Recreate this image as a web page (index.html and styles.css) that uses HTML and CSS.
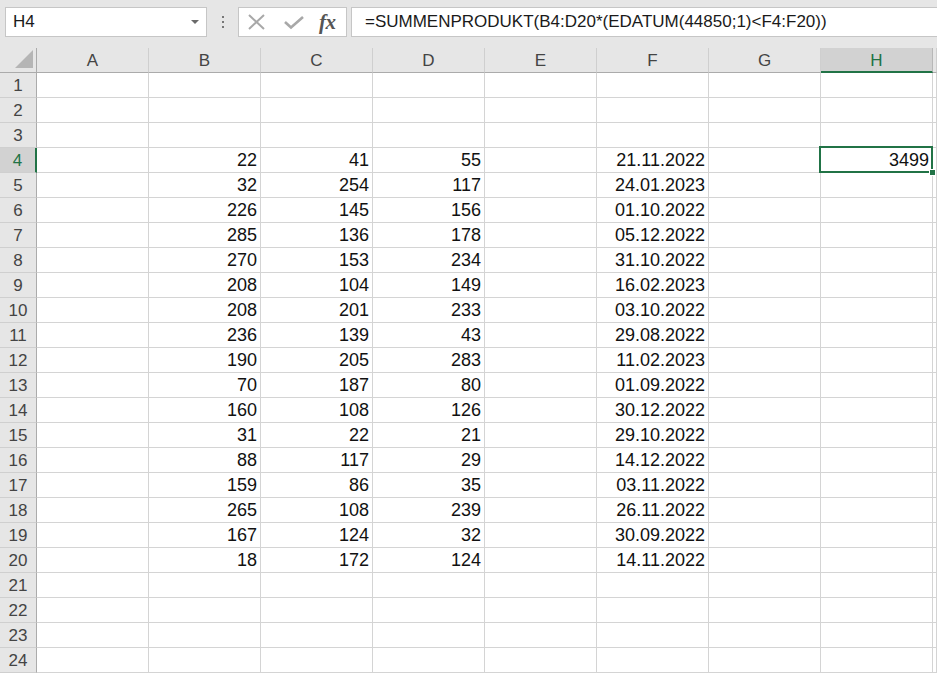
FILE: index.html
```html
<!DOCTYPE html>
<html>
<head>
<meta charset="utf-8">
<link rel="stylesheet" href="styles.css">
</head>
<body>
<div class="toolbar">
  <div class="namebox"><span class="nb-text">H4</span><span class="nb-arrow"></span></div>
  <div class="dots"><span></span><span></span><span></span></div>
  <div class="btnbox">
    <svg class="ico" width="24" height="24" viewBox="0 0 24 24"><path d="M4 5 L19 19 M19 5 L4 19" stroke="#a8a8a8" stroke-width="2" fill="none"/></svg>
    <svg class="ico" width="24" height="24" viewBox="0 0 24 24"><path d="M3 12 L9 17.5 L21 7" stroke="#a8a8a8" stroke-width="2.6" fill="none"/></svg>
    <span class="fx">fx</span>
  </div>
  <div class="formula">=SUMMENPRODUKT(B4:D20*(EDATUM(44850;1)&lt;F4:F20))</div>
</div>
<div class="sheet">
  <div class="corner"><svg width="36" height="24" viewBox="0 0 36 24"><polygon points="33,2 33,20 15,20" fill="#b5b5b5"/></svg></div>
  <div class="ch">A</div><div class="ch">B</div><div class="ch">C</div><div class="ch">D</div><div class="ch">E</div><div class="ch">F</div><div class="ch">G</div><div class="ch sel">H</div><div class="ch"></div>

  <div class="rh">1</div><div class="c"></div><div class="c"></div><div class="c"></div><div class="c"></div><div class="c"></div><div class="c"></div><div class="c"></div><div class="c"></div><div class="c"></div>
  <div class="rh">2</div><div class="c"></div><div class="c"></div><div class="c"></div><div class="c"></div><div class="c"></div><div class="c"></div><div class="c"></div><div class="c"></div><div class="c"></div>
  <div class="rh">3</div><div class="c"></div><div class="c"></div><div class="c"></div><div class="c"></div><div class="c"></div><div class="c"></div><div class="c"></div><div class="c"></div><div class="c"></div>
  <div class="rh sel">4</div><div class="c"></div><div class="c">22</div><div class="c">41</div><div class="c">55</div><div class="c"></div><div class="c">21.11.2022</div><div class="c"></div><div class="c active">3499<span class="selbox"><span class="handle"></span></span></div><div class="c"></div>
  <div class="rh">5</div><div class="c"></div><div class="c">32</div><div class="c">254</div><div class="c">117</div><div class="c"></div><div class="c">24.01.2023</div><div class="c"></div><div class="c"></div><div class="c"></div>
  <div class="rh">6</div><div class="c"></div><div class="c">226</div><div class="c">145</div><div class="c">156</div><div class="c"></div><div class="c">01.10.2022</div><div class="c"></div><div class="c"></div><div class="c"></div>
  <div class="rh">7</div><div class="c"></div><div class="c">285</div><div class="c">136</div><div class="c">178</div><div class="c"></div><div class="c">05.12.2022</div><div class="c"></div><div class="c"></div><div class="c"></div>
  <div class="rh">8</div><div class="c"></div><div class="c">270</div><div class="c">153</div><div class="c">234</div><div class="c"></div><div class="c">31.10.2022</div><div class="c"></div><div class="c"></div><div class="c"></div>
  <div class="rh">9</div><div class="c"></div><div class="c">208</div><div class="c">104</div><div class="c">149</div><div class="c"></div><div class="c">16.02.2023</div><div class="c"></div><div class="c"></div><div class="c"></div>
  <div class="rh">10</div><div class="c"></div><div class="c">208</div><div class="c">201</div><div class="c">233</div><div class="c"></div><div class="c">03.10.2022</div><div class="c"></div><div class="c"></div><div class="c"></div>
  <div class="rh">11</div><div class="c"></div><div class="c">236</div><div class="c">139</div><div class="c">43</div><div class="c"></div><div class="c">29.08.2022</div><div class="c"></div><div class="c"></div><div class="c"></div>
  <div class="rh">12</div><div class="c"></div><div class="c">190</div><div class="c">205</div><div class="c">283</div><div class="c"></div><div class="c">11.02.2023</div><div class="c"></div><div class="c"></div><div class="c"></div>
  <div class="rh">13</div><div class="c"></div><div class="c">70</div><div class="c">187</div><div class="c">80</div><div class="c"></div><div class="c">01.09.2022</div><div class="c"></div><div class="c"></div><div class="c"></div>
  <div class="rh">14</div><div class="c"></div><div class="c">160</div><div class="c">108</div><div class="c">126</div><div class="c"></div><div class="c">30.12.2022</div><div class="c"></div><div class="c"></div><div class="c"></div>
  <div class="rh">15</div><div class="c"></div><div class="c">31</div><div class="c">22</div><div class="c">21</div><div class="c"></div><div class="c">29.10.2022</div><div class="c"></div><div class="c"></div><div class="c"></div>
  <div class="rh">16</div><div class="c"></div><div class="c">88</div><div class="c">117</div><div class="c">29</div><div class="c"></div><div class="c">14.12.2022</div><div class="c"></div><div class="c"></div><div class="c"></div>
  <div class="rh">17</div><div class="c"></div><div class="c">159</div><div class="c">86</div><div class="c">35</div><div class="c"></div><div class="c">03.11.2022</div><div class="c"></div><div class="c"></div><div class="c"></div>
  <div class="rh">18</div><div class="c"></div><div class="c">265</div><div class="c">108</div><div class="c">239</div><div class="c"></div><div class="c">26.11.2022</div><div class="c"></div><div class="c"></div><div class="c"></div>
  <div class="rh">19</div><div class="c"></div><div class="c">167</div><div class="c">124</div><div class="c">32</div><div class="c"></div><div class="c">30.09.2022</div><div class="c"></div><div class="c"></div><div class="c"></div>
  <div class="rh">20</div><div class="c"></div><div class="c">18</div><div class="c">172</div><div class="c">124</div><div class="c"></div><div class="c">14.11.2022</div><div class="c"></div><div class="c"></div><div class="c"></div>
  <div class="rh">21</div><div class="c"></div><div class="c"></div><div class="c"></div><div class="c"></div><div class="c"></div><div class="c"></div><div class="c"></div><div class="c"></div><div class="c"></div>
  <div class="rh">22</div><div class="c"></div><div class="c"></div><div class="c"></div><div class="c"></div><div class="c"></div><div class="c"></div><div class="c"></div><div class="c"></div><div class="c"></div>
  <div class="rh">23</div><div class="c"></div><div class="c"></div><div class="c"></div><div class="c"></div><div class="c"></div><div class="c"></div><div class="c"></div><div class="c"></div><div class="c"></div>
  <div class="rh">24</div><div class="c"></div><div class="c"></div><div class="c"></div><div class="c"></div><div class="c"></div><div class="c"></div><div class="c"></div><div class="c"></div><div class="c"></div>
</div>
</body>
</html>
```
FILE: styles.css
```css
html, body {
  margin: 0;
  padding: 0;
  overflow: hidden;
  background: #ffffff;
  font-family: "Liberation Sans", Arial, sans-serif;
}
.toolbar {
  height: 48px;
  box-sizing: border-box;
  background: #e6e6e6;
  display: flex;
  align-items: flex-start;
  padding: 7px 0 0 5px;
}
.namebox {
  width: 202px;
  height: 30px;
  box-sizing: border-box;
  background: #fff;
  border: 1px solid #c6c6c6;
  display: flex;
  align-items: center;
  justify-content: space-between;
  padding: 0 7px 0 7px;
}
.nb-text {
  font-size: 17px;
  color: #1a1a1a;
}
.nb-arrow {
  width: 0;
  height: 0;
  border-left: 4px solid transparent;
  border-right: 4px solid transparent;
  border-top: 4px solid #6a6a6a;
}
.dots {
  width: 31px;
  height: 30px;
  display: flex;
  flex-direction: column;
  align-items: center;
  justify-content: center;
  gap: 3px;
}
.dots span {
  width: 2px;
  height: 2px;
  background: #777;
}
.btnbox {
  width: 109px;
  height: 30px;
  box-sizing: border-box;
  background: #fff;
  border: 1px solid #c6c6c6;
  display: flex;
  align-items: center;
  padding-left: 6px;
  gap: 13px;
}
.ico {
  display: block;
}
.fx {
  font-family: "Liberation Serif", "Times New Roman", serif;
  font-style: italic;
  font-weight: bold;
  font-size: 21px;
  color: #555;
  margin-left: 0px;
  letter-spacing: -0.5px;
}
.formula {
  flex: 1;
  height: 30px;
  box-sizing: border-box;
  background: #fff;
  border: 1px solid #c6c6c6;
  border-right: none;
  margin-left: 4px;
  padding-left: 13px;
  font-size: 17px;
  line-height: 28px;
  color: #1a1a1a;
  white-space: nowrap;
  overflow: hidden;
}
.sheet {
  display: grid;
  grid-template-columns: 37px repeat(8, 112px) 1fr;
  grid-auto-rows: 25px;
}
.corner {
  background: #e6e6e6;
  border-right: 1px solid #ababab;
  border-bottom: 1px solid #ababab;
  box-sizing: border-box;
}
.corner svg { display: block; }
.ch {
  background: #e6e6e6;
  border-right: 1px solid #cfcfcf;
  border-bottom: 1px solid #ababab;
  box-sizing: border-box;
  text-align: center;
  font-size: 17px;
  line-height: 25px;
  color: #444;
}
.ch.sel {
  background: #d2d2d2;
  color: #217346;
  border-bottom: 2px solid #217346;
  border-right-color: #b8b8b8;
}
.rh {
  background: #e6e6e6;
  border-right: 1px solid #ababab;
  border-bottom: 1px solid #cfcfcf;
  box-sizing: border-box;
  text-align: center;
  font-size: 17px;
  line-height: 25px;
  color: #444;
}
.rh.sel {
  background: #d2d2d2;
  color: #217346;
  border-right: 2px solid #217346;
}
.c {
  border-right: 1px solid #d4d4d4;
  border-bottom: 1px solid #d4d4d4;
  box-sizing: border-box;
  text-align: right;
  padding-right: 3px;
  font-size: 18px;
  line-height: 25px;
  color: #111;
  white-space: nowrap;
}
.active {
  position: relative;
}
.selbox {
  position: absolute;
  left: -2px;
  top: -2px;
  right: -1px;
  bottom: -1px;
  border: 2px solid #217346;
  pointer-events: none;
}
.handle {
  position: absolute;
  right: -5px;
  bottom: -5px;
  width: 5px;
  height: 5px;
  background: #217346;
  border: 1px solid #fff;
}
```
